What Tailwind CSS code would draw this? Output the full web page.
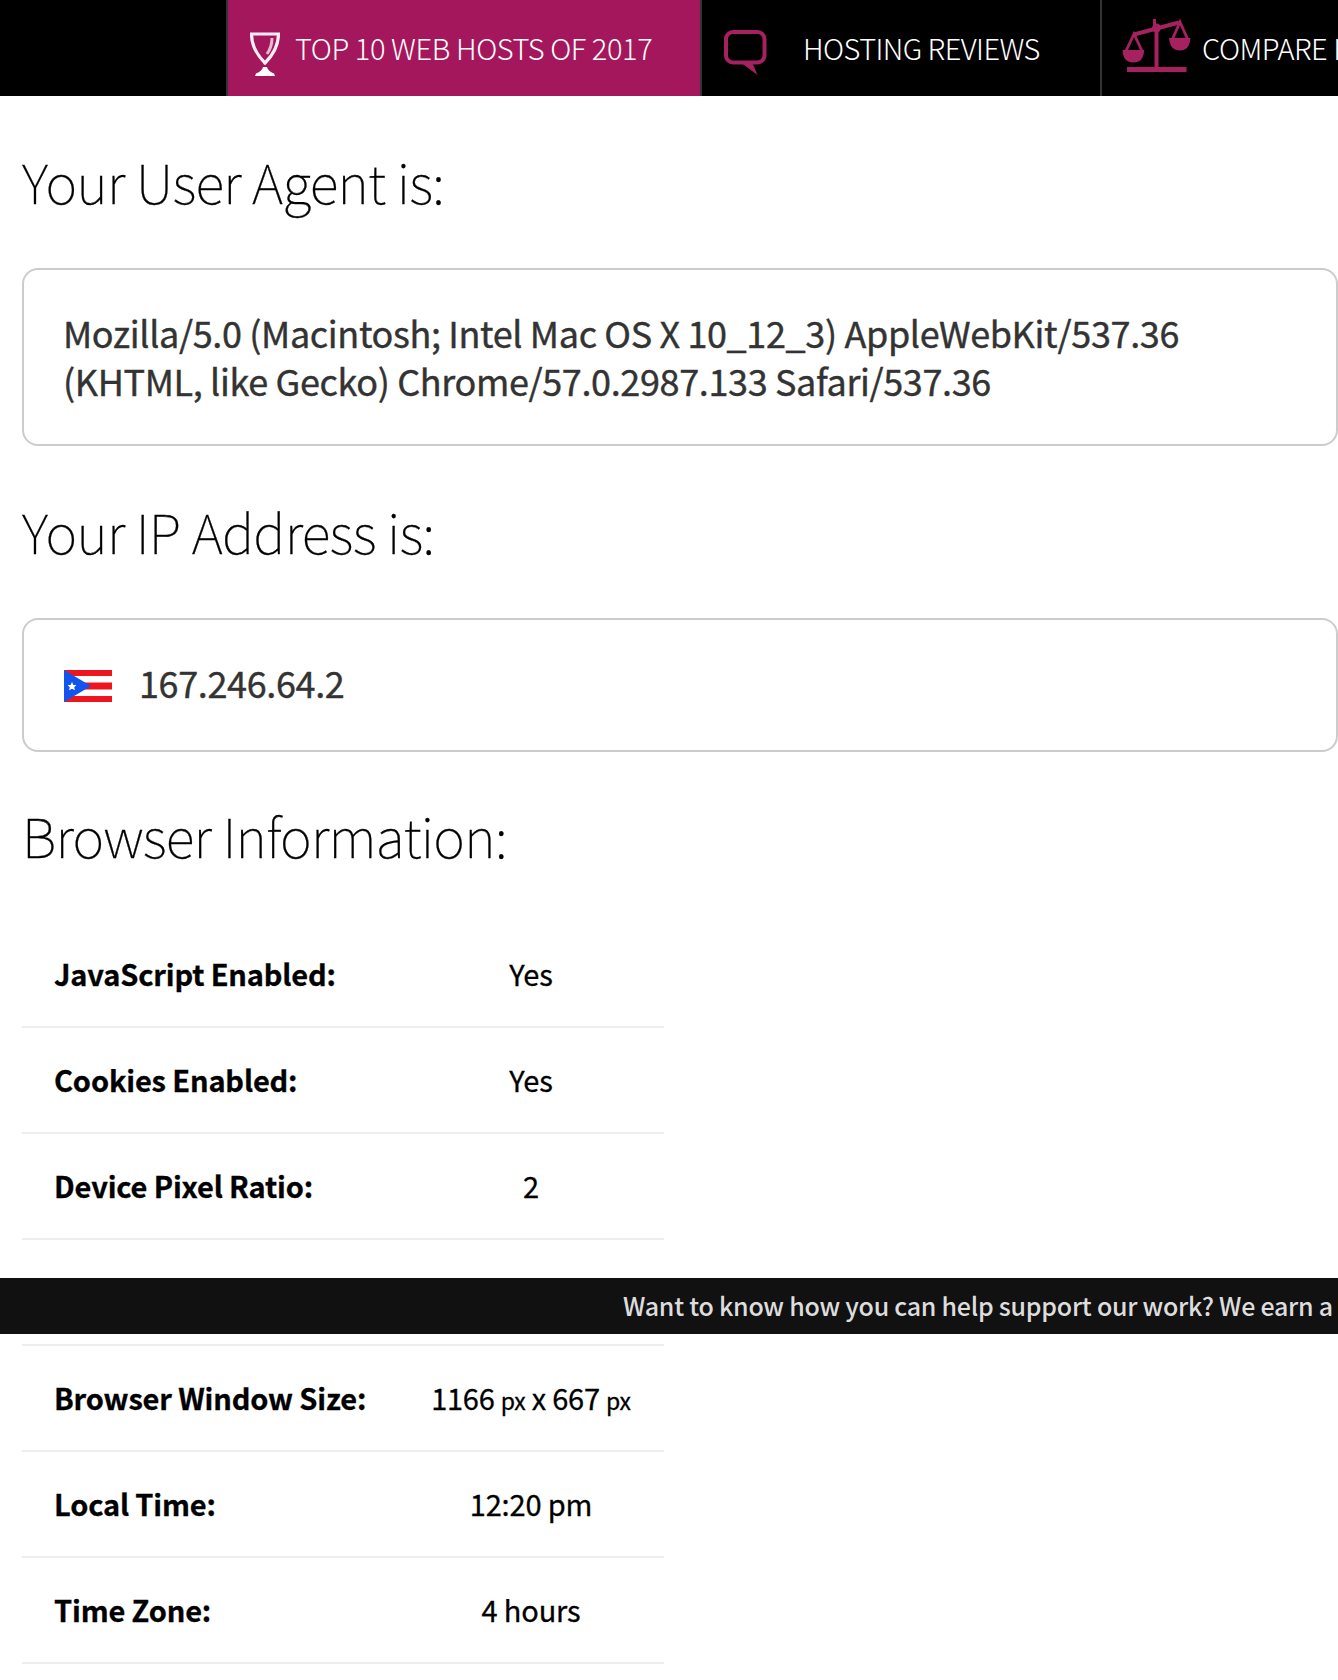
<!DOCTYPE html>
<html lang="en">
<head>
<meta charset="utf-8">
<title>Your User Agent</title>
<script src="https://cdn.jsdelivr.net/npm/@tailwindcss/browser@4"></script>
</head>
<body class="w-[1338px] h-[1680px] overflow-hidden bg-white text-black font-['Noto_Sans_CJK_SC',sans-serif]">
<nav class="flex h-24 w-full overflow-hidden bg-black pl-[226px] text-white whitespace-nowrap font-light text-[29px] leading-[94px]">
  <a class="flex w-[474px] shrink-0 border-l-2 border-[#333] bg-[#a5175c]">
    <svg class="ml-[22px] mt-[32px] mr-[15px] h-11 w-[30px] shrink-0" viewBox="0 0 30 44" fill="none" stroke="#fff">
      <path d="M1.500 2H28.500C28.500 15 22 24 15 31C8 24 1.500 15 1.500 2Z" stroke-width="3.200" opacity=".93"/>
      <path d="M22 6Q22 15 17 22" stroke-width="3" opacity=".7"/>
      <path d="M13 35h4q1 4 7 6.500l1 2.500H5l1-2.500q6-2.500 7-6.500Z" fill="#fff" stroke="none"/>
    </svg>
    <span class="tracking-[-0.4px]">TOP 10 WEB HOSTS OF 2017</span>
  </a>
  <a class="flex w-[400px] shrink-0 border-l-2 border-[#333]">
    <svg class="ml-[21px] mt-[29px] mr-[36px] h-[47px] w-[44px] shrink-0" viewBox="0 0 44 47" fill="none">
      <rect x="3" y="3" width="38.500" height="30.500" rx="7" stroke="#a5215f" stroke-width="4"/>
      <path d="M17 33L34.500 46L29 33Z" fill="#a5215f"/>
    </svg>
    <span class="tracking-[-0.56px]">HOSTING REVIEWS</span>
  </a>
  <a class="flex min-w-0 flex-1 overflow-hidden border-l-2 border-[#333]">
    <svg class="ml-[20px] mt-[18px] mr-[11px] h-[56px] w-[69px] shrink-0" viewBox="0 0 69 56" fill="none" stroke="#a5215f">
      <path d="M5 51.500H64.500" stroke-width="5"/>
      <path d="M34.500 12V50M12 16.500L57 4.500" stroke-width="4"/>
      <circle cx="34.500" cy="10" r="3" stroke-width="3"/>
      <path d="M32.500 7V1" stroke-width="3"/>
      <path d="M4 33L12 16L20 33M50.500 21L58 4L65.500 21" stroke-width="2.800"/>
      <path d="M.5 32H22.200Q21.500 44.500 11.500 44.500Q1 44.500 .5 32ZM47 20H68.500Q67.500 32.500 58 32.500Q48 32.500 47 20Z" fill="#a5215f" stroke="none"/>
    </svg>
    <span class="tracking-[-0.5px]">COMPARE HOSTS</span>
  </a>
</nav>
<main class="pl-[22px]">
  <h1 class="h-[172px] pt-[45px] text-[54px] leading-[80px] font-thin tracking-[-0.7px] [-webkit-text-stroke:0.3px]">Your User Agent is:</h1>
  <div class="h-[178px] w-[1316px] rounded-2xl border-2 border-[#ccc] pl-[39px] pt-[38px] text-[36px] leading-[48px] tracking-[-0.37px] text-[#333] [-webkit-text-stroke:0.4px]">Mozilla/5.0 (Macintosh; Intel Mac OS X 10_12_3) AppleWebKit/537.36<br>(KHTML, like Gecko) Chrome/57.0.2987.133 Safari/537.36</div>
  <h1 class="h-[172px] pt-[45px] text-[54px] leading-[80px] font-thin tracking-[-0.7px] [-webkit-text-stroke:0.3px]">Your IP Address is:</h1>
  <div class="flex h-[134px] w-[1316px] items-center rounded-2xl border-2 border-[#ccc] px-10 text-[36px] leading-[48px] tracking-[-0.37px] text-[#333] [-webkit-text-stroke:0.4px]">
    <svg class="mt-0.5 mr-[27px] h-8 w-12" viewBox="0 0 48 32">
      <path fill="#ee151f" d="M0 0h48v6H0zM0 12.500h48v7H0zM0 26h48v6H0z"/>
      <path fill="#1155ee" d="M0 0L27 16L0 32Z"/>
      <path fill="#fff" d="M8 12l1.400 3h3l-2.200 2.200l.8 3L8 18.700l-3 1.500l.8-3L3.600 15h3z"/>
    </svg>
    <span class="mb-[7px]">167.246.64.2</span>
  </div>
  <h1 class="h-[170px] pt-[43px] text-[54px] leading-[80px] font-thin tracking-[-0.7px] [-webkit-text-stroke:0.3px]">Browser Information:</h1>
  <div class="w-[642px] text-[29px] tracking-[-0.15px] [-webkit-text-stroke:0.3px]">
    <div class="flex h-[106px] items-center border-b-2 border-[#eee] pl-8"><b class="w-[344px]">JavaScript Enabled:</b><span class="flex-1 text-center">Yes</span></div>
    <div class="flex h-[106px] items-center border-b-2 border-[#eee] pl-8"><b class="w-[344px]">Cookies Enabled:</b><span class="flex-1 text-center">Yes</span></div>
    <div class="flex h-[106px] items-center border-b-2 border-[#eee] pl-8"><b class="w-[344px]">Device Pixel Ratio:</b><span class="flex-1 text-center">2</span></div>
    <div class="h-[106px] border-b-2 border-[#eee]"></div>
    <div class="flex h-[106px] items-center border-b-2 border-[#eee] pl-8"><b class="w-[344px]">Browser Window Size:</b><span class="flex-1 text-center whitespace-nowrap tracking-[-0.25px]">1166 <span class="text-[23px]">px</span> x 667 <span class="text-[23px]">px</span></span></div>
    <div class="flex h-[106px] items-center border-b-2 border-[#eee] pl-8"><b class="w-[344px]">Local Time:</b><span class="flex-1 text-center">12:20 pm</span></div>
    <div class="flex h-[106px] items-center border-b-2 border-[#eee] pl-8"><b class="w-[344px]">Time Zone:</b><span class="flex-1 text-center">4 hours</span></div>
  </div>
</main>
<aside class="fixed left-0 top-[1278px] h-14 w-[1338px] overflow-hidden whitespace-nowrap bg-[#111] pl-[623px] text-[25px] leading-[54px] font-medium tracking-[-0.25px] text-[#ddd]">Want to know how you can help support our work? We earn a</aside>
</body>
</html>
